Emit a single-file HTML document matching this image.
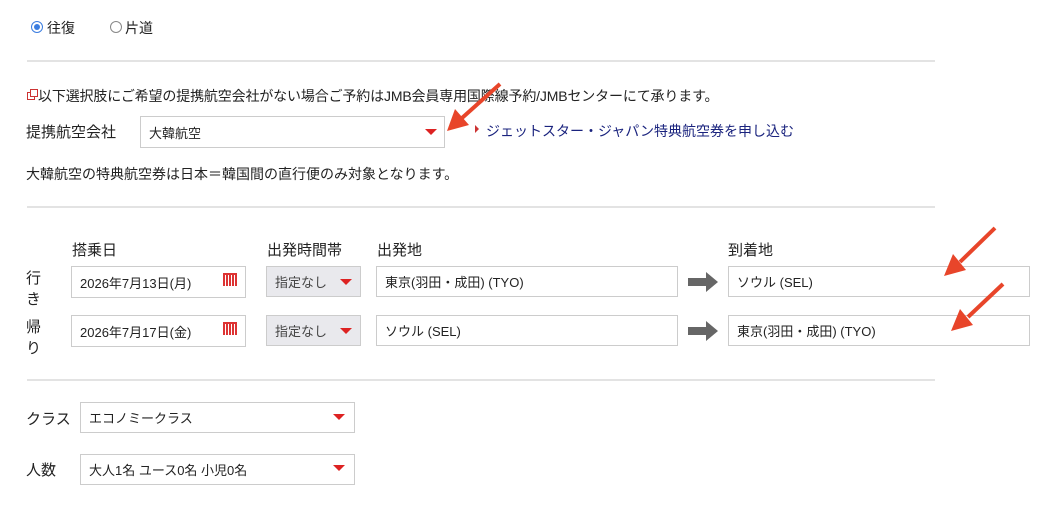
<!DOCTYPE html><html><head><meta charset="utf-8"><style>
body{margin:0;width:1051px;height:508px;background:#fff;font-family:"Liberation Sans","Noto Sans CJK JP",sans-serif;color:#222;position:relative;overflow:hidden}
.a{position:absolute;white-space:nowrap}
.box{position:absolute;border:1px solid #ccc;background:#fff;box-sizing:border-box;font-size:13px;padding-left:8px;display:flex;align-items:center}
.hr{position:absolute;left:27px;width:908px;height:2px;background:#e3e3e3}
.tri{position:absolute;width:0;height:0;border-left:6px solid transparent;border-right:6px solid transparent;border-top:6px solid #d22}
.lbl{font-size:15px;color:#222}
.cal{position:absolute;width:14px;height:13px;background:repeating-linear-gradient(90deg,#d33 0 2px,transparent 2px 3px);border-top:2px solid #d33;box-sizing:border-box}
.gar{position:absolute}
</style></head><body>
<div class="a" style="left:31px;top:21px;width:10px;height:10px;border:1px solid #3b7de0;border-radius:50%"></div>
<div class="a" style="left:34px;top:24px;width:6px;height:6px;background:#3b7de0;border-radius:50%"></div>
<div class="a" style="left:47px;top:18px;font-size:14px">往復</div>
<div class="a" style="left:110px;top:21px;width:10px;height:10px;border:1px solid #888;border-radius:50%"></div>
<div class="a" style="left:125px;top:18px;font-size:14px">片道</div>
<div class="hr" style="top:60px"></div>
<div class="a" style="left:27px;top:92px;width:6px;height:6px;border:1px solid #c33"></div>
<div class="a" style="left:30px;top:89px;width:6px;height:6px;border:1px solid #c33;background:#fff"></div>
<div class="a" style="left:38px;top:86px;font-size:14px;letter-spacing:-0.15px">以下選択肢にご希望の提携航空会社がない場合ご予約はJMB会員専用国際線予約/JMBセンターにて承ります。</div>
<div class="a lbl" style="left:26px;top:121px">提携航空会社</div>
<div class="box" style="left:140px;top:116px;width:305px;height:32px">大韓航空</div>
<div class="tri" style="left:425px;top:129px"></div>
<div class="a" style="left:475px;top:125px;border-left:4px solid #c33;border-top:4px solid transparent;border-bottom:4px solid transparent"></div>
<div class="a" style="left:486px;top:121px;font-size:14px;color:#1a237e">ジェットスター・ジャパン特典航空券を申し込む</div>
<div class="a" style="left:26px;top:164px;font-size:14px">大韓航空の特典航空券は日本＝韓国間の直行便のみ対象となります。</div>
<div class="hr" style="top:206px"></div>
<div class="a lbl" style="left:72px;top:239px">搭乗日</div>
<div class="a lbl" style="left:267px;top:239px">出発時間帯</div>
<div class="a lbl" style="left:377px;top:239px">出発地</div>
<div class="a lbl" style="left:728px;top:239px">到着地</div>
<div class="a lbl" style="left:26px;top:268px;line-height:21px;width:16px;white-space:normal">行き</div>
<div class="a lbl" style="left:26px;top:317px;line-height:21px;width:16px;white-space:normal">帰り</div>
<div class="box" style="left:71px;top:266px;width:175px;height:32px">2026年7月13日(月)</div>
<div class="cal" style="left:223px;top:273px"></div>
<div class="box" style="left:71px;top:315px;width:175px;height:32px">2026年7月17日(金)</div>
<div class="cal" style="left:223px;top:322px"></div>
<div class="box" style="left:266px;top:266px;width:95px;height:31px;background:#e9e9ed;color:#444">指定なし</div>
<div class="tri" style="left:340px;top:279px"></div>
<div class="box" style="left:266px;top:315px;width:95px;height:31px;background:#e9e9ed;color:#444">指定なし</div>
<div class="tri" style="left:340px;top:328px"></div>
<div class="box" style="left:376px;top:266px;width:302px;height:31px">東京(羽田・成田) (TYO)</div>
<div class="box" style="left:376px;top:315px;width:302px;height:31px">ソウル (SEL)</div>
<svg class="gar" style="left:688px;top:272px" width="32" height="20"><path d="M0 6h18V0l12 10-12 10v-6H0z" fill="#666"/></svg>
<svg class="gar" style="left:688px;top:321px" width="32" height="20"><path d="M0 6h18V0l12 10-12 10v-6H0z" fill="#666"/></svg>
<div class="box" style="left:728px;top:266px;width:302px;height:31px">ソウル (SEL)</div>
<div class="box" style="left:728px;top:315px;width:302px;height:31px">東京(羽田・成田) (TYO)</div>
<div class="hr" style="top:379px"></div>
<div class="a lbl" style="left:26px;top:408px">クラス</div>
<div class="box" style="left:80px;top:402px;width:275px;height:31px">エコノミークラス</div>
<div class="tri" style="left:333px;top:414px"></div>
<div class="a lbl" style="left:26px;top:459px">人数</div>
<div class="box" style="left:80px;top:454px;width:275px;height:31px">大人1名 ユース0名 小児0名</div>
<div class="tri" style="left:333px;top:465px"></div>
<svg class="a" style="left:0;top:0" width="1051" height="508">
<g stroke="#e8452a" stroke-width="4" fill="#e8452a">
<line x1="500" y1="84" x2="462" y2="118"/><path d="M447 131l8-22 14 16z" stroke="none"/>
<line x1="995" y1="228" x2="960" y2="262"/><path d="M944 276l9-22 13 16z" stroke="none"/>
<line x1="1003" y1="284" x2="968" y2="317"/><path d="M951 331l9-22 13 16z" stroke="none"/>
</g></svg>
</body></html>
